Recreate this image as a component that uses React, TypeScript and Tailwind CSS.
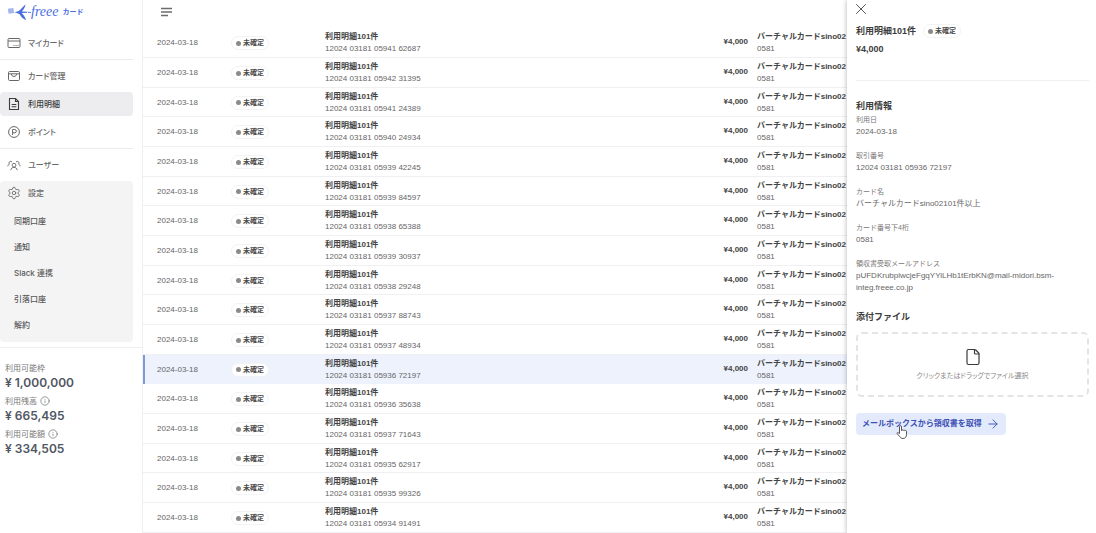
import { ArrowRight, File, Info, Settings, X } from "lucide-react";
import type { ReactNode } from "react";

const transactions = [
  "12024 03181 05941 62687",
  "12024 03181 05942 31395",
  "12024 03181 05941 24389",
  "12024 03181 05940 24934",
  "12024 03181 05939 42245",
  "12024 03181 05939 84597",
  "12024 03181 05938 65388",
  "12024 03181 05939 30937",
  "12024 03181 05938 29248",
  "12024 03181 05937 88743",
  "12024 03181 05937 48934",
  "12024 03181 05936 72197",
  "12024 03181 05936 35638",
  "12024 03181 05937 71643",
  "12024 03181 05935 62917",
  "12024 03181 05935 99326",
  "12024 03181 05934 91491",
];

const SELECTED = "12024 03181 05936 72197";

const settingsLinks = ["同期口座", "通知", "Slack 連携", "引落口座", "解約"];

const balances = [
  { label: "利用可能枠", amount: "¥ 1,000,000", info: false },
  { label: "利用残高", amount: "¥ 665,495", info: true },
  { label: "利用可能額", amount: "¥ 334,505", info: true },
];

const details = [
  { label: "利用日", value: "2024-03-18" },
  { label: "取引番号", value: SELECTED },
  { label: "カード名", value: "バーチャルカードsino02101件以上" },
  { label: "カード番号下4桁", value: "0581" },
  { label: "領収書受取メールアドレス", value: "pUFDKrubplwcjeFgqYYiLHb1tErbKN@mail-midori.bsm-integ.freee.co.jp" },
];

function CardIcon() {
  return (
    <svg viewBox="0 0 14 14" className="h-3.5 w-3.5" fill="none" stroke="currentColor">
      <rect x="1" y="2.5" width="12" height="9" rx="1" />
      <path d="M1 5h12M6.5 9.5h1M8.5 9.5h1M10.5 9.5h1" />
    </svg>
  );
}

function WalletIcon() {
  return (
    <svg viewBox="0 0 14 14" className="h-3.5 w-3.5" fill="none" stroke="currentColor">
      <rect x="1.5" y="2.5" width="11" height="9" rx="1.2" />
      <path d="M1.5 4.8h11M4.3 5c0 1.4 1.2 2.4 2.7 2.4S9.700 6.400 9.700 5" />
    </svg>
  );
}

function StatementIcon() {
  return (
    <svg viewBox="0 0 14 14" className="h-3.5 w-3.5" fill="none" stroke="currentColor" strokeWidth="1.1">
      <path d="M2.500 1.500h6l3 3v8h-9ZM8.500 1.500v3h3M4.700 7.500h4.600M4.700 9.800h4.600" />
    </svg>
  );
}

function PointIcon() {
  return (
    <svg viewBox="0 0 14 14" className="h-3.5 w-3.5" fill="none" stroke="currentColor">
      <circle cx="7" cy="7" r="5.4" />
      <path d="M5.600 10V4.500h2.100a1.600 1.600 0 0 1 0 3.300H5.600" />
    </svg>
  );
}

function UsersIcon() {
  return (
    <svg viewBox="0 0 14 14" className="h-3.5 w-3.5" fill="none" stroke="currentColor" strokeWidth="0.9">
      <circle cx="7" cy="7.2" r="1.9" />
      <path d="M3.800 12.200c.2-1.900 1.500-2.800 3.200-2.800s3 .9 3.200 2.800" />
      <path d="M.8 8.300c.1-1.200.7-1.900 1.600-2.100A1.700 1.700 0 1 1 5 4M13.200 8.300c-.1-1.200-.7-1.900-1.600-2.100A1.700 1.700 0 1 0 9 4" />
    </svg>
  );
}

function Logo() {
  return (
    <a href="#" aria-label="freee カード" className="flex h-6 items-center pl-[7px] text-[#4a6ee0]">
      <svg viewBox="0 0 24 20" className="h-5 w-6 shrink-0" fill="currentColor">
        <path d="M.8 6.700 6.300 6l.8 5-5.500.7Z" opacity="0.5" />
        <path d="M7.500 10.200c3-.6 4.500-1 6-2.700l5-5.200c-.2 2.500-1.500 5-3.700 7.200l5.400.3v.9l-5.400.2c1.700 1.900 3.200 4 4.500 7.300-3.500-1.300-5.300-3.500-6.600-6-1.300-.9-3-1.300-5.200-2Z" />
        <path d="M21 9.900h3v.9h-3Z" />
      </svg>
      <span className="font-['Liberation_Serif',serif] text-[14px] leading-4 italic">freee</span>
      <span className="ml-1 text-[7px] font-bold">カード</span>
    </a>
  );
}

function NavItem({ icon, label, active = false }: { icon: ReactNode; label: string; active?: boolean }) {
  return (
    <a
      href="#"
      className={`flex h-6 items-center gap-[7px] rounded pl-[7px] text-[8px] font-medium [font-feature-settings:'palt'] ${
        active ? "bg-[#ededf0] text-[#3c3c3c]" : "text-[#686868]"
      }`}
    >
      {icon}
      {label}
    </a>
  );
}

function StatusBadge() {
  return (
    <span className="inline-flex h-3.5 items-center gap-[2px] rounded-full border border-[#f3f3f3] bg-white px-1 text-[7px] leading-3 font-bold text-[#4a4a4a]">
      <span className="h-[5px] w-[5px] rounded-full bg-[#8c8989]" />
      未確定
    </span>
  );
}

function Sidebar() {
  return (
    <aside className="flex w-[143px] shrink-0 flex-col border-r border-[#efeff1]">
      <Logo />
      <nav className="mr-[9px] pt-[7px]">
        <div className="border-b border-[#ececee] pb-1">
          <NavItem icon={<CardIcon />} label="マイカード" />
        </div>
        <div className="flex flex-col gap-1 border-b border-[#ececee] py-1">
          <NavItem icon={<WalletIcon />} label="カード管理" />
          <NavItem icon={<StatementIcon />} label="利用明細" active />
          <NavItem icon={<PointIcon />} label="ポイント" />
        </div>
        <div className="flex flex-col gap-1 pt-1">
          <NavItem icon={<UsersIcon />} label="ユーザー" />
          <div className="rounded bg-[#f4f4f5] pb-1">
            <NavItem icon={<Settings className="h-3.5 w-3.5" strokeWidth={1.5} />} label="設定" />
            <ul className="pt-[3px]">
              {settingsLinks.map((label) => (
                <li key={label}>
                  <a href="#" className="flex h-[26px] items-center pl-3.5 text-[8px] font-medium text-[#595959]">
                    {label}
                  </a>
                </li>
              ))}
            </ul>
          </div>
        </div>
      </nav>
      <dl className="mt-[5px] flex flex-col gap-1 border-t border-[#efeff1] pt-[13px] pl-[5px]">
        {balances.map((b) => (
          <div key={b.label}>
            <dt className="flex items-center gap-[3px] text-[8px] leading-[14px] text-[#7a7777]">
              {b.label}
              {b.info && <Info className="h-2.5 w-2.5" strokeWidth={1.8} />}
            </dt>
            <dd className="text-[12px] leading-[15px] font-semibold text-[#505662]">{b.amount}</dd>
          </div>
        ))}
      </dl>
    </aside>
  );
}

function TransactionTable() {
  return (
    <main className="min-w-0 flex-1 overflow-hidden">
      <header className="flex h-7 items-start pl-[18px]">
        <button type="button" aria-label="メニュー" className="mt-1 flex h-4 items-center text-[#6e6b6b]">
          <svg viewBox="0 0 11 10" className="h-2.5 w-[11px]" fill="none" stroke="currentColor" strokeWidth="1.4">
            <path d="M0 1.500h11M0 5h11M0 8.500h7" />
          </svg>
        </button>
      </header>
      <table className="w-full table-fixed border-collapse font-['Liberation_Sans','Noto_Sans_CJK_JP',sans-serif] text-[8px] leading-3">
        <colgroup>
          <col className="w-[88px]" />
          <col className="w-[94px]" />
          <col />
          <col className="w-[100px]" />
          <col className="w-[90px]" />
        </colgroup>
        <tbody>
          {transactions.map((id) => (
            <tr
              key={id}
              className={`h-[30px] nth-[3n]:h-[29px] ${
                id === SELECTED
                  ? "bg-[#edf2fd] shadow-[inset_2px_0_0_#7d99da]"
                  : "shadow-[inset_0_-1px_0_#f0f0f2]"
              }`}
            >
              <td className="py-0 pl-3.5 text-[#666]">2024-03-18</td>
              <td className="p-0">
                <div className="flex">
                  <StatusBadge />
                </div>
              </td>
              <td className="p-0">
                <p className="font-bold text-[#444]">利用明細101件</p>
                <p className="text-[#666]">{id}</p>
              </td>
              <td className="pt-0 pr-[9px] pb-0.5 text-right font-bold text-[#444]">¥4,000</td>
              <td className="p-0 whitespace-nowrap">
                <p className="font-bold text-[#444]">バーチャルカードsino02</p>
                <p className="text-[#666]">0581</p>
              </td>
            </tr>
          ))}
        </tbody>
      </table>
    </main>
  );
}

function PointerCursor() {
  return (
    <svg viewBox="0 0 12 14" className="pointer-events-none absolute top-3 left-10 h-3.5 w-3" fill="#fff" stroke="#444" strokeWidth="0.9">
      <path d="M3.500 8.500V1.700a1 1 0 0 1 2 0V5.500a.9.9 0 0 1 1.700 0 .9.9 0 0 1 1.700.3.9.9 0 0 1 1.600.6V9.500c0 2.500-1.300 4-3.500 4-1.700 0-2.500-.7-3.300-2L1.200 8.700c-.5-.9.600-1.600 1.300-.9Z" />
    </svg>
  );
}

function DetailDrawer() {
  return (
    <section
      aria-label="利用明細101件"
      className="relative w-[249px] shrink-0 overflow-y-auto bg-white pr-[7px] pl-[9px] font-['Liberation_Sans','Noto_Sans_CJK_JP',sans-serif] shadow-[0_0_5px_rgba(0,0,0,0.3)]"
    >
      <button type="button" aria-label="閉じる" className="-ml-1 flex h-[17px] items-center text-[#444]">
        <X className="h-[18px] w-[18px]" strokeWidth={1.2} />
      </button>
      <div className="mt-[7px] flex items-center gap-[7px]">
        <h1 className="text-[9px] leading-[14px] font-bold text-[#3c3c3c]">利用明細101件</h1>
        <StatusBadge />
      </div>
      <p className="mt-1 text-[9px] leading-[14px] font-bold text-[#3c3c3c]">¥4,000</p>
      <hr className="mt-6 border-[#efefef]" />

      <h2 className="mt-[17px] text-[9px] leading-4 font-bold text-[#3c3c3c]">利用情報</h2>
      <dl className="flex flex-col gap-3 leading-3">
        {details.map((d) => (
          <div key={d.label}>
            <dt className="text-[7px] text-[#7a7777]">{d.label}</dt>
            <dd className="text-[8px] text-[#666]">{d.value}</dd>
          </div>
        ))}
      </dl>

      <h2 className="mt-[15px] text-[9px] leading-4 font-bold text-[#3c3c3c]">添付ファイル</h2>
      <label className="mt-[7px] flex h-[65px] flex-col items-center justify-center gap-1 rounded-md border-2 border-dashed border-[#e4e4e4] text-[7px] leading-3 text-[#8c8989] [font-feature-settings:'palt']">
        <File className="h-[18px] w-[18px] text-[#3c3c3c]" strokeWidth={1.6} />
        クリックまたはドラッグでファイル選択
        <input type="file" className="sr-only" />
      </label>

      <button
        type="button"
        className="relative mt-4 flex h-[22px] items-center gap-1 rounded bg-[#e3eafc] px-1.5 text-[8px] font-bold text-[#3d51b5]"
      >
        メールボックスから領収書を取得
        <ArrowRight className="h-3.5 w-3.5" strokeWidth={1.6} />
        <PointerCursor />
      </button>
    </section>
  );
}

export default function App() {
  return (
    <div lang="ja" className="flex h-screen overflow-hidden bg-white font-['Inter','Noto_Sans_CJK_JP',sans-serif]">
      <Sidebar />
      <TransactionTable />
      <DetailDrawer />
    </div>
  );
}
